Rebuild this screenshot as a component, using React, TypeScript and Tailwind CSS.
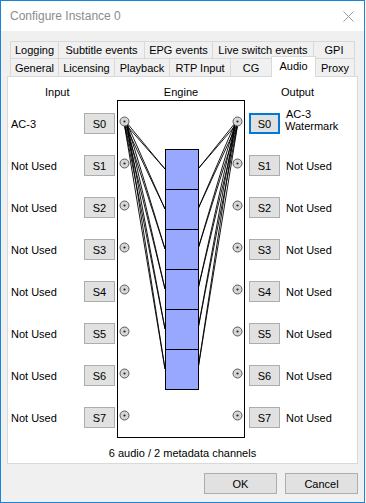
import React from "react";

const font = { fontFamily: "'Liberation Sans', Arial, sans-serif" };

function Tab({ label, w, last }: { label: string; w: number; last?: boolean }) {
  return (
    <div
      className={`flex h-full items-center justify-center border-l border-t border-[#d9d9d9] bg-[#f0f0f0] pt-[1px] text-[11px] leading-none text-black ${last ? "border-r" : ""}`}
      style={{ width: w }}
    >
      {label}
    </div>
  );
}

function Btn({ label, selected }: { label: string; selected?: boolean }) {
  return (
    <div
      className={`flex h-[21px] items-center justify-center bg-[#e1e1e1] pt-[1px] text-[11px] leading-none text-black ${
        selected ? "border-2 border-[#0078d7]" : "border border-[#adadad]"
      }`}
      style={{ width: 31 }}
    >
      {label}
    </div>
  );
}

const rows = [0, 1, 2, 3, 4, 5, 6, 7];
const leftLabels = ["AC-3", "Not Used", "Not Used", "Not Used", "Not Used", "Not Used", "Not Used", "Not Used"];

function Engine() {
  const lc = 6.5;
  const rc = 119.5;
  const cy = (i: number) => 20.5 + 42 * i;
  const mids = [0, 1, 2, 3, 4, 5].map((k) => 68 + 40 * k);
  return (
    <div className="relative h-[338px] w-[128px] border border-black bg-white">
      <svg className="absolute left-0 top-0" width="126" height="336" viewBox="0 0 126 336">
        {mids.map((m, k) => (
          <g key={k} stroke="#000" strokeWidth="0.9">
            <line x1={lc - 0.5} y1={cy(0) + 1} x2={47} y2={m} />
            <line x1={lc + 2} y1={cy(0) + 1} x2={47} y2={m} />
            <line x1={rc + 0.5} y1={cy(0) + 1} x2={80} y2={m} />
            <line x1={rc - 2} y1={cy(0) + 1} x2={80} y2={m} />
          </g>
        ))}
        {[0, 1, 2, 3, 4, 5].map((k) => (
          <rect key={k} x={47.5} y={48.5 + 40 * k} width={33} height={40} fill="#99a8ff" stroke="#000" strokeWidth="1" />
        ))}
        {rows.map((i) => (
          <g key={i}>
            <circle cx={lc} cy={cy(i)} r={4.5} fill="#d6d6d6" stroke="#5a5a5a" strokeWidth="1" />
            <circle cx={lc} cy={cy(i)} r={1.1} fill="#222" />
            <circle cx={rc} cy={cy(i)} r={4.5} fill="#d6d6d6" stroke="#5a5a5a" strokeWidth="1" />
            <circle cx={rc} cy={cy(i)} r={1.1} fill="#222" />
          </g>
        ))}
      </svg>
    </div>
  );
}

export default function App() {
  return (
    <div className="h-[503px] w-[366px] bg-white" style={font}>
      <div className="flex h-[503px] w-[365px] flex-col border border-[#1883d7] bg-[#f0f0f0]">
        {/* title bar */}
        <div className="flex h-[30px] items-center justify-between bg-white pl-[9px] pr-[10px]">
          <span className="text-[12px] text-[#8c8c8c]">Configure Instance 0</span>
          <svg width="11" height="11" viewBox="0 0 11 11">
            <line x1="0.5" y1="0.5" x2="10.5" y2="10.5" stroke="#9a9a9a" strokeWidth="1" />
            <line x1="10.5" y1="0.5" x2="0.5" y2="10.5" stroke="#9a9a9a" strokeWidth="1" />
          </svg>
        </div>

        {/* body */}
        <div className="flex flex-1 flex-col pt-[10px]">
          <div className="pl-[9px]">
            <div className="flex h-[17px]">
              <Tab label="Logging" w={48} />
              <Tab label="Subtitle events" w={86} />
              <Tab label="EPG events" w={68} />
              <Tab label="Live switch events" w={101} />
              <Tab label="GPI" w={42} last />
            </div>
            <div className="flex h-[18px] items-end">
              <Tab label="General" w={48} />
              <Tab label="Licensing" w={56} />
              <Tab label="Playback" w={55} />
              <Tab label="RTP Input" w={61} />
              <Tab label="CG" w={41} />
              <div className="relative z-10 -mb-[1px] flex h-[21px] w-[45px] items-start justify-center border-x border-t border-[#d9d9d9] bg-white pt-[4px] text-[11px] leading-none text-black">
                Audio
              </div>
              <div className="flex h-full w-[39px] items-center justify-center border-r border-t border-[#d9d9d9] bg-[#f0f0f0] pt-[1px] text-[11px] leading-none text-black">
                Proxy
              </div>
            </div>
          </div>

          {/* panel */}
          <div className="ml-[6px] flex h-[388px] w-[351px] flex-col border border-[#d9d9d9] bg-white">
            <div className="flex h-[23px] pt-[7px] text-[11px] leading-[16px] text-black">
              <div className="w-[109px] pl-[37px]">Input</div>
              <div className="w-[128px] text-center">Engine</div>
              <div className="pl-[36px]">Output</div>
            </div>
            <div className="flex">
              <div className="flex w-[109px] flex-col gap-[21px] pl-[3px] pr-[2px] pt-[13px]">
                {rows.map((i) => (
                  <div key={i} className="flex h-[21px] items-center justify-between pt-[2px] text-[11px] text-black">
                    <span>{leftLabels[i]}</span>
                    <div className="-mt-[2px]">
                      <Btn label={`S${i}`} />
                    </div>
                  </div>
                ))}
              </div>
              <Engine />
              <div className="flex flex-col gap-[21px] pl-[4px] pt-[13px]">
                {rows.map((i) => (
                  <div key={i} className="flex h-[21px] items-center text-[11px] text-black">
                    <Btn label={`S${i}`} selected={i === 0} />
                    {i === 0 ? (
                      <div className="ml-[5px] -mt-[7px] flex flex-col leading-[12px]">
                        <div className="pl-[1px]">AC-3</div>
                        <div>Watermark</div>
                      </div>
                    ) : (
                      <span className="ml-[6px] pt-[2px]">Not Used</span>
                    )}
                  </div>
                ))}
              </div>
            </div>
            <div className="mt-[7px] text-center text-[11px] leading-[16px] text-black">6 audio / 2 metadata channels</div>
          </div>

          {/* buttons */}
          <div className="mt-[9px] flex justify-end gap-[8px] pr-[6px]">
            <div className="flex h-[21px] w-[73px] items-center justify-center border border-[#adadad] bg-[#e1e1e1] pt-[1px] text-[11px] text-black">
              OK
            </div>
            <div className="flex h-[21px] w-[73px] items-center justify-center border border-[#adadad] bg-[#e1e1e1] pt-[1px] text-[11px] text-black">
              Cancel
            </div>
          </div>
        </div>
      </div>
    </div>
  );
}
